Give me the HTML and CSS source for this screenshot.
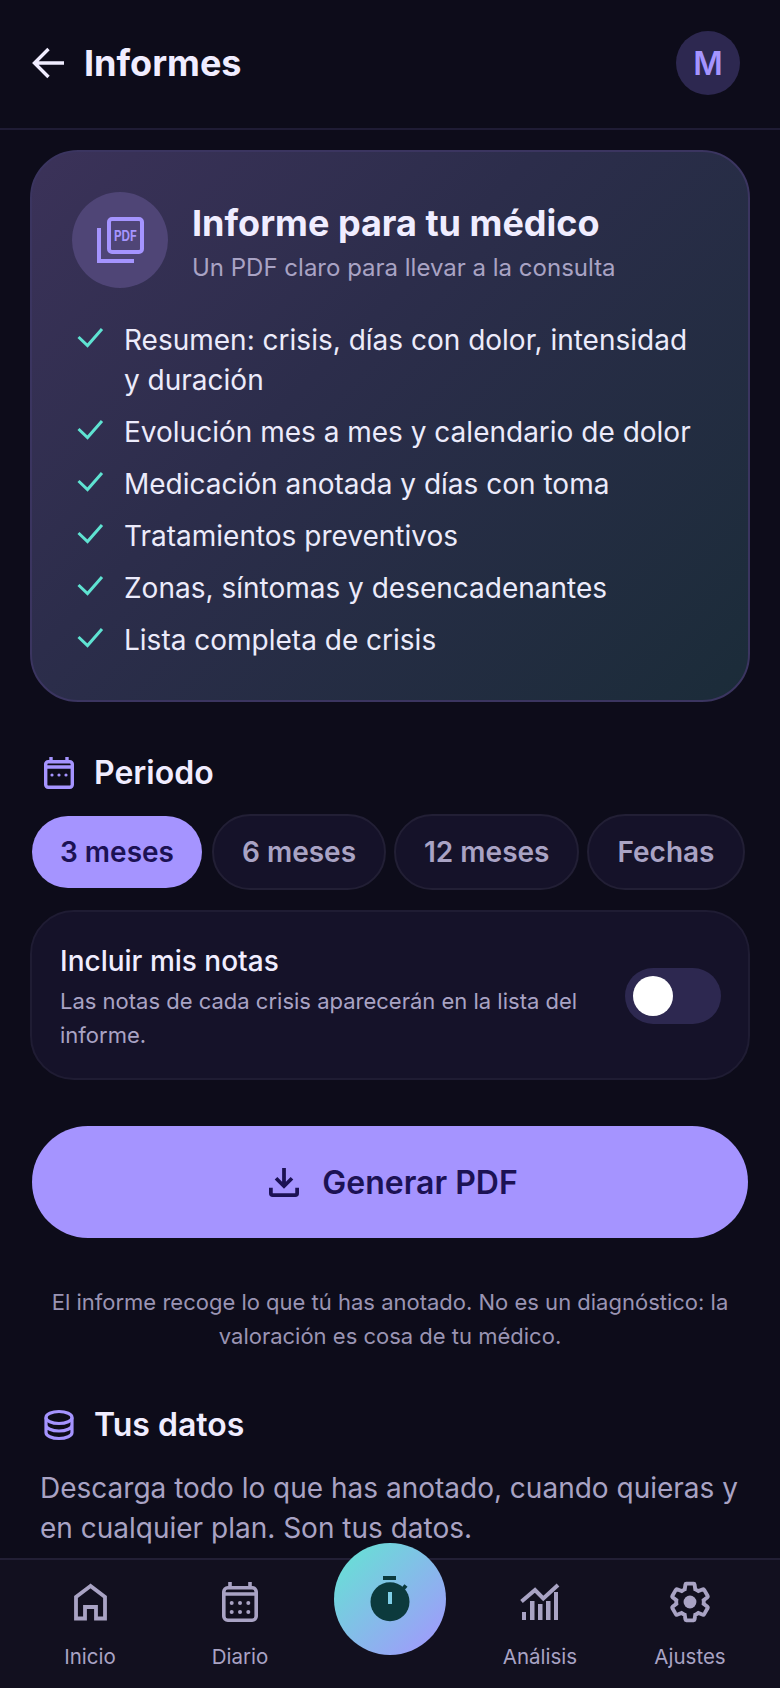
FILE: index.html
```html
<!DOCTYPE html>
<html lang="es">
<head>
<meta charset="utf-8">
<title>Informes</title>
<link rel="stylesheet" href="styles.css">
</head>
<body>
<div class="app">
  <header class="topbar">
    <div class="topbar-left">
      <svg class="back" viewBox="0 0 32 32" fill="none" stroke="currentColor" stroke-width="3.4"><path d="M32 16H3M16.5 2 2.5 16l14 14"/></svg>
      <h1 class="page-title">Informes</h1>
    </div>
    <div class="avatar">M</div>
  </header>

  <main class="content">
    <section class="hero">
      <div class="hero-head">
        <div class="hero-icon">
          <svg class="pdf-icon" viewBox="0 0 48 48" fill="none" stroke="currentColor" stroke-width="4">
            <rect x="13" y="3" width="33" height="33" rx="3"/>
            <path d="M3 12v33h35"/>
            <text class="pdf-text" x="18" y="24.500" textLength="23" lengthAdjust="spacingAndGlyphs">PDF</text>
          </svg>
        </div>
        <div class="hero-copy">
          <h2 class="hero-title">Informe para tu médico</h2>
          <p class="hero-sub">Un PDF claro para llevar a la consulta</p>
        </div>
      </div>
      <ul class="checks">
        <li class="check-row"><svg class="check" viewBox="0 0 32 32" fill="none" stroke="currentColor" stroke-width="3"><path d="m6.500 14 9 8.500L30 6"/></svg><span>Resumen: crisis, días con dolor, intensidad y duración</span></li>
        <li class="check-row"><svg class="check" viewBox="0 0 32 32" fill="none" stroke="currentColor" stroke-width="3"><path d="m6.500 14 9 8.500L30 6"/></svg><span>Evolución mes a mes y calendario de dolor</span></li>
        <li class="check-row"><svg class="check" viewBox="0 0 32 32" fill="none" stroke="currentColor" stroke-width="3"><path d="m6.500 14 9 8.500L30 6"/></svg><span>Medicación anotada y días con toma</span></li>
        <li class="check-row"><svg class="check" viewBox="0 0 32 32" fill="none" stroke="currentColor" stroke-width="3"><path d="m6.500 14 9 8.500L30 6"/></svg><span>Tratamientos preventivos</span></li>
        <li class="check-row"><svg class="check" viewBox="0 0 32 32" fill="none" stroke="currentColor" stroke-width="3"><path d="m6.500 14 9 8.500L30 6"/></svg><span>Zonas, síntomas y desencadenantes</span></li>
        <li class="check-row"><svg class="check" viewBox="0 0 32 32" fill="none" stroke="currentColor" stroke-width="3"><path d="m6.500 14 9 8.500L30 6"/></svg><span>Lista completa de crisis</span></li>
      </ul>
    </section>

    <div class="section-head period-head">
      <svg class="section-icon" viewBox="0 0 30 32" fill="none" stroke="currentColor" stroke-width="3.400">
        <rect x="1.700" y="4.700" width="26.600" height="25.600" rx="2.500"/>
        <path d="M7 0v5M23 0v5M2 10h26"/>
        <g fill="currentColor" stroke="none"><circle cx="8" cy="18" r="1.600"/><circle cx="15" cy="18" r="1.600"/><circle cx="22" cy="18" r="1.600"/></g>
      </svg>
      <h3 class="section-title">Periodo</h3>
    </div>

    <div class="pills">
      <button class="pill pill-active">3 meses</button>
      <button class="pill">6 meses</button>
      <button class="pill">12 meses</button>
      <button class="pill">Fechas</button>
    </div>

    <div class="notes">
      <div class="notes-text">
        <div class="notes-title">Incluir mis notas</div>
        <div class="notes-desc">Las notas de cada crisis aparecerán en la lista del informe.</div>
      </div>
      <div class="toggle"><span class="knob"></span></div>
    </div>

    <button class="generate">
      <svg class="dl-icon" viewBox="0 0 32 32" fill="none" stroke="currentColor" stroke-width="4"><path d="M16 1v19M7.500 12l8.500 8.500 8.500-8.500"/><path d="M2 22v6a2 2 0 0 0 2 2h24a2 2 0 0 0 2-2v-6"/></svg>
      <span>Generar PDF</span>
    </button>

    <p class="disclaimer">El informe recoge lo que tú has anotado. No es un diagnóstico: la valoración es cosa de tu médico.</p>

    <div class="section-head data-head">
      <svg class="section-icon" viewBox="0 0 30 32" fill="none" stroke="currentColor" stroke-width="3.200">
        <ellipse cx="15" cy="8.500" rx="13" ry="6"/>
        <path d="M2 8.500v15c0 3.300 5.800 6 13 6s13-2.700 13-6v-15M2 16c0 3.300 5.800 6 13 6s13-2.700 13-6"/>
      </svg>
      <h3 class="section-title">Tus datos</h3>
    </div>
    <p class="data-text">Descarga todo lo que has anotado, cuando quieras y en cualquier plan. Son tus datos.</p>
  </main>

  <nav class="bottom-nav">
    <div class="nav-item">
      <svg class="nav-icon" viewBox="0 0 44 44" fill="none" stroke="currentColor" stroke-width="3.800"><path d="M22.500 6 8 17v21.500h9V27h11v11.500h9V17z"/></svg>
      <span>Inicio</span>
    </div>
    <div class="nav-item">
      <svg class="nav-icon" viewBox="0 0 44 44" fill="none" stroke="currentColor" stroke-width="3.600">
        <rect x="5.800" y="7.800" width="32.400" height="32.400" rx="4"/>
        <path d="M12 2v6M32 2v6M6 14h32"/>
        <g fill="currentColor" stroke="none"><circle cx="13.700" cy="23" r="2"/><circle cx="22" cy="23" r="2"/><circle cx="30.300" cy="23" r="2"/><circle cx="13.700" cy="32" r="2"/><circle cx="22" cy="32" r="2"/><circle cx="30.300" cy="32" r="2"/></g>
      </svg>
      <span>Diario</span>
    </div>
    <div class="fab-cell">
      <div class="fab">
        <svg class="fab-icon" viewBox="0 0 48 56">
          <rect class="fab-dark" x="17" y="5" width="13" height="4"/>
          <circle class="fab-dark" cx="24" cy="30.700" r="19.500"/>
          <path class="fab-knob" d="m36 19 4-4.500"/>
          <rect class="fab-hand" x="22" y="21" width="4" height="12"/>
        </svg>
      </div>
    </div>
    <div class="nav-item">
      <svg class="nav-icon" viewBox="0 0 44 44" fill="currentColor">
        <path d="M3.500 21.500 17 10l8.300 8.500L40 5" fill="none" stroke="currentColor" stroke-width="4"/>
        <rect x="4" y="32" width="4" height="8"/><rect x="12" y="21" width="4.500" height="19"/><rect x="20" y="24" width="4.500" height="16"/><rect x="28" y="21" width="4.500" height="19"/><rect x="36" y="12" width="4" height="28"/>
      </svg>
      <span>Análisis</span>
    </div>
    <div class="nav-item">
      <svg class="nav-icon" viewBox="0 0 24 24" fill="none" stroke="currentColor" stroke-width="2.100">
        <path d="M19.430 12.980c.04-.32.07-.64.07-.98s-.03-.66-.07-.98l2.110-1.650c.19-.15.24-.42.12-.64l-2-3.460c-.12-.22-.39-.3-.61-.22l-2.490 1c-.52-.4-1.080-.73-1.690-.98l-.38-2.650C14.460 2.180 14.250 2 14 2h-4c-.25 0-.46.18-.49.42l-.38 2.650c-.61.25-1.170.59-1.690.98l-2.490-1c-.23-.09-.49 0-.61.22l-2 3.460c-.13.22-.07.49.12.64l2.110 1.650c-.04.32-.07.65-.07.98s.03.66.07.98l-2.110 1.650c-.19.15-.24.42-.12.64l2 3.460c.12.22.39.3.61.22l2.490-1c.52.4 1.080.73 1.690.98l.38 2.650c.03.24.24.42.49.42h4c.25 0 .46-.18.49-.42l.38-2.650c.61-.25 1.170-.59 1.690-.98l2.490 1c.23.09.49 0 .61-.22l2-3.460c.12-.22.07-.49-.12-.64z"/>
        <circle cx="12" cy="12" r="3.500" fill="currentColor" stroke="none"/>
      </svg>
      <span>Ajustes</span>
    </div>
  </nav>
</div>
</body>
</html>
```

FILE: styles.css
```css
* { box-sizing: border-box; }
html, body { margin: 0; padding: 0; background: #0d0c1a; }
body { font-family: Inter, "Noto Sans", sans-serif; color: #f0edff; }
h1, h2, h3, p, ul { margin: 0; padding: 0; }
ul { list-style: none; }
button { font-family: inherit; cursor: pointer; }

.app { width: 780px; height: 1688px; display: flex; flex-direction: column; overflow: hidden; background: #0d0c1a; }

.topbar { height: 130px; flex: none; display: flex; align-items: center; justify-content: space-between; padding: 0 40px 2px 32px; border-bottom: 2px solid #1f1c35; }
.topbar-left { display: flex; align-items: center; gap: 20px; }
.back { width: 32px; height: 32px; color: #f0edff; }
.page-title { font-size: 36px; font-weight: 700; line-height: 44px; }
.avatar { width: 64px; height: 64px; border-radius: 50%; background: #2d2850; color: #a594ff; font-size: 32px; font-weight: 600; display: flex; align-items: center; justify-content: center; }

.content { flex: 1; min-height: 0; overflow: hidden; padding: 20px 30px 0; }

.hero { height: 552px; padding: 40px; border: 2px solid #3b3560; border-radius: 48px; background: linear-gradient(135deg, #3b3259 0%, #2c2d4b 40%, #1b2c39 100%); }
.hero-head { display: flex; align-items: center; gap: 24px; }
.hero-icon { width: 96px; height: 96px; flex: none; border-radius: 50%; background: #4f4576; display: flex; align-items: center; justify-content: center; color: #a594ff; }
.pdf-icon { width: 48px; height: 48px; }
.pdf-text { font-size: 14px; font-weight: 700; fill: currentColor; stroke: none; }
.hero-copy { padding-top: 4px; }
.hero-title { font-size: 36px; font-weight: 700; line-height: 46px; }
.hero-sub { font-size: 24px; line-height: 32px; color: #a9a3c4; margin-top: 6px; }

.checks { margin-top: 32px; display: flex; flex-direction: column; gap: 12px; }
.check-row { display: flex; gap: 20px; font-size: 28px; line-height: 40px; color: #ecebfb; }
.check { width: 32px; height: 32px; flex: none; color: #5fe3d2; margin-top: 3px; }

.section-head { display: flex; align-items: center; gap: 20px; height: 40px; padding-left: 14px; }
.section-icon { width: 30px; height: 32px; flex: none; color: #a594ff; }
.section-title { font-size: 32px; font-weight: 600; line-height: 40px; }
.period-head { margin-top: 51px; }
.data-head { margin-top: 52px; }

.pills { display: flex; gap: 8px; margin-top: 21px; }
.pill { height: 76px; padding: 0 28px; border: 2px solid #221f35; border-radius: 38px; background: #151229; color: #a9a3c4; font-size: 28px; font-weight: 600; }
.pill-active { background: #a594ff padding-box; border-color: transparent; color: #1c1254; }

.notes { margin-top: 20px; height: 170px; padding: 28px 27px 28px 28px; border: 2px solid #1f1c33; border-radius: 44px; background: #151229; display: flex; align-items: center; gap: 40px; }
.notes-text { flex: 1; min-width: 0; padding-top: 2px; }
.notes-title { font-size: 28px; font-weight: 500; line-height: 40px; }
.notes-desc { font-size: 22px; line-height: 34px; color: #a9a3c4; margin-top: 3px; }
.toggle { width: 96px; height: 56px; flex: none; border-radius: 28px; background: #2d2850; padding: 8px; display: flex; margin-top: 2px; }
.knob { width: 40px; height: 40px; border-radius: 50%; background: #ffffff; }

.generate { width: 100%; height: 116px; margin-top: 44px; padding: 0 0 0 7px; border: 2px solid transparent; border-radius: 58px; background: #a594ff padding-box; color: #1c1254; font-size: 32px; font-weight: 600; display: flex; align-items: center; justify-content: center; gap: 23px; }
.dl-icon { width: 30px; height: 30px; flex: none; }

.disclaimer { margin-top: 45px; padding: 0 10px; font-size: 22px; line-height: 34px; color: #9a94b3; text-align: center; }

.data-text { margin-top: 23px; padding: 0 10px; font-size: 28px; line-height: 40px; color: #a9a3c4; }

.bottom-nav { height: 130px; flex: none; border-top: 2px solid #221f35; background: #12101f; padding: 0 15px; display: grid; grid-template-columns: repeat(5, 150px); }
.nav-item { padding-top: 20px; display: flex; flex-direction: column; align-items: center; gap: 19px; color: #a9a3c4; font-size: 20.500px; line-height: 28px; }
.nav-icon { width: 44px; height: 44px; flex: none; }
.fab-cell { display: flex; justify-content: center; }
.fab { width: 112px; height: 112px; margin-top: -17px; border-radius: 50%; background: linear-gradient(135deg, #62e6d2 0%, #a594ff 100%); display: flex; align-items: center; justify-content: center; flex: none; }
.fab-icon { width: 48px; height: 56px; }
.fab-dark { fill: #0c3a3d; }
.fab-knob { stroke: #0c3a3d; stroke-width: 4; fill: none; }
.fab-hand { fill: #7fcfe8; }
```
